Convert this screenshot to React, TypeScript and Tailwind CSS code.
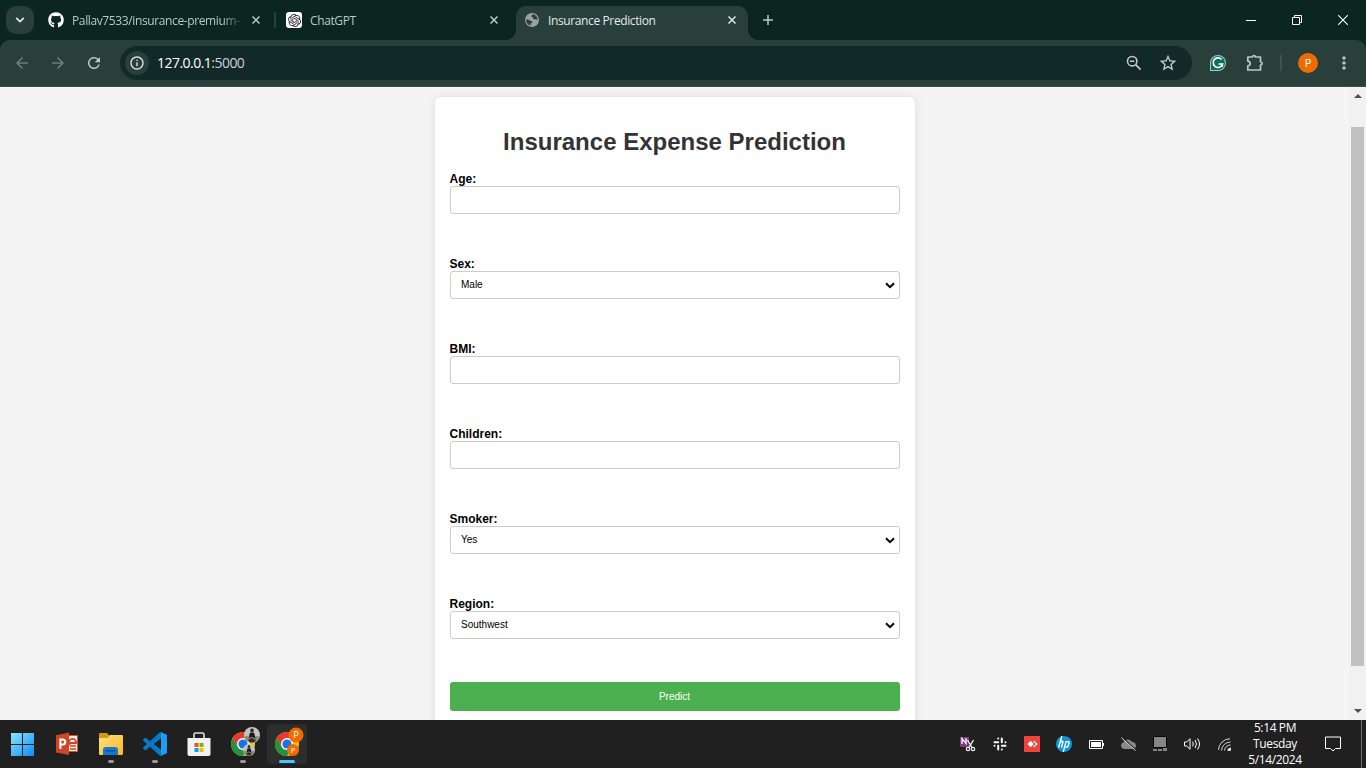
import type { ReactNode } from "react";
import { FaGithub } from "react-icons/fa6";
import { SiOpenai } from "react-icons/si";
import {
  MdArrowBack,
  MdArrowForward,
  MdMoreVert,
  MdOutlineInfo,
  MdRefresh,
  MdStarBorder,
} from "react-icons/md";

function Cross({ className }: { className: string }) {
  return (
    <svg viewBox="0 0 8 8" className={className} fill="none" stroke="currentColor" strokeWidth="1.5">
      <path d="M.5.5l7 7M7.5.5l-7 7" />
    </svg>
  );
}

function TabStrip() {
  return (
    <div className="flex h-10 items-center bg-[#0b2521] pl-1.5 text-[12px] text-[#b4ccc5]">
      <button className="flex size-7 shrink-0 items-center justify-center rounded-[10px] bg-[#293f3b]">
        <svg viewBox="0 0 10 6" className="h-[6px] w-[10px]" fill="none" stroke="#dfe9e6" strokeWidth="1.8">
          <path d="M1.2.8L5 4.6 8.8.8" />
        </svg>
      </button>
      <div className="flex w-[240px] shrink-0 items-center pl-[14px]">
        <FaGithub className="size-4 shrink-0 text-white" />
        <span className="ml-2 w-[168px] pt-0.5 whitespace-nowrap tracking-[-0.38px] [mask-image:linear-gradient(to_right,black_150px,transparent_172px)]">
          Pallav7533/insurance-premium-
        </span>
        <Cross className="ml-[12px] size-2 shrink-0" />
      </div>
      <div className="h-4 w-0.5 shrink-0 bg-[#293f3b]" />
      <div className="flex w-[240px] shrink-0 items-center pl-[10px]">
        <span className="flex size-4 items-center justify-center rounded-[3px] bg-white">
          <SiOpenai className="size-[13px] text-[#222]" />
        </span>
        <span className="ml-2 w-[180px] pt-0.5 tracking-[-0.38px]">ChatGPT</span>
        <Cross className="size-2 shrink-0" />
      </div>
      <div className="flex h-[34px] w-[232px] shrink-0 items-center self-end">
        <div className="relative flex h-full w-full items-center rounded-t-[10px] bg-[#293f3b] pb-[6px] pl-[9px] text-[#e1e9e7] before:absolute before:bottom-0 before:-left-[10px] before:size-[10px] before:bg-[radial-gradient(circle_at_0_0,transparent_9.5px,#293f3b_10.2px)] after:absolute after:-right-[10px] after:bottom-0 after:size-[10px] after:bg-[radial-gradient(circle_at_100%_0,transparent_9.5px,#293f3b_10.2px)]">
          <svg viewBox="0 0 14 14" className="size-[14px]">
            <circle cx="7" cy="7" r="7" fill="#9aa0a6" />
            <path
              d="M8.2 1.3c-.4.9-1.5.8-1.9 1.6-.3.8.6 1.2 1.5 1.2.6.8-.3 1.5.4 2 .9.6 2.5-.2 3.6.5.5.3.7.9.6 1.4A6 6 0 0 0 8.2 1.3zM1.1 6.4c1.8 0 2.9.2 3.8 1 .6.6 1.6.5 2.3 1 .5.5.1 1.5-.7 1.6-1 0-.8 1.2-1 2.4A6 6 0 0 1 1.1 6.4z"
              fill="#293f3b"
            />
          </svg>
          <span className="ml-[9px] w-[179px] pt-0.5 tracking-[-0.38px]">Insurance Prediction</span>
          <Cross className="ml-px size-2 shrink-0" />
        </div>
      </div>
      <svg viewBox="0 0 10 10" className="ml-[15px] size-[10px] shrink-0" stroke="#b4ccc5" strokeWidth="1.5">
        <path d="M5 0v10M0 5h10" />
      </svg>
      <div className="ml-auto flex h-full items-center text-white">
        <div className="flex w-[46px] justify-center">
          <div className="h-px w-[10px] bg-white" />
        </div>
        <div className="flex w-[46px] justify-center">
          <svg viewBox="0 0 10 10" className="size-[10px]" fill="none" stroke="white">
            <path d="M.5 2.5h7v7h-7zM2.5 2.5v-2h7v7h-2" />
          </svg>
        </div>
        <div className="flex w-[46px] justify-center">
          <svg viewBox="0 0 10 10" className="size-[10px]" fill="none" stroke="white" strokeWidth="1.1">
            <path d="M.2.2l9.6 9.6M9.8.2L.2 9.8" />
          </svg>
        </div>
      </div>
    </div>
  );
}

function Toolbar() {
  return (
    <div className="bg-[#0b2521]">
      <div className="flex h-[47px] items-center rounded-t-[10px] border-b border-[#3c4f4b] bg-[#293f3b]">
        <div className="flex w-[120px] shrink-0 items-center pl-1">
          <span className="flex w-9 justify-center text-[#6c7f7a]">
            <MdArrowBack className="size-[18px]" />
          </span>
          <span className="flex w-9 justify-center text-[#6c7f7a]">
            <MdArrowForward className="size-[18px]" />
          </span>
          <span className="flex w-9 justify-center text-[#b4ccc5]">
            <MdRefresh className="size-[18px]" />
          </span>
        </div>
        <div className="flex h-[34px] w-[1072px] shrink-0 items-center rounded-full bg-[#122a27] pl-[5px] text-[#c7c9c8]">
          <span className="flex size-6 items-center justify-center rounded-full bg-[#293f3b]">
            <MdOutlineInfo className="size-4 text-[#dfe6e4]" />
          </span>
          <span className="ml-2 pb-px text-[14px] tracking-[-0.53px] text-[#c9d0ce]">
            <span className="text-white">127.0.0.1</span>:5000
          </span>
          <svg viewBox="0 0 16 16" className="mr-4 ml-auto size-4" fill="none" stroke="currentColor" strokeWidth="1.6">
            <circle cx="6.2" cy="6.2" r="4.7" />
            <path d="M4 6.2h4.4M9.6 9.6l5 5" />
          </svg>
          <MdStarBorder className="mr-[14px] size-5" />
        </div>
        <div className="flex grow items-center text-[#b4ccc5]">
          <svg viewBox="0 0 16 16" className="ml-[18px] size-4">
            <path d="M8 0a8 8 0 1 1 0 16H0V8a8 8 0 0 1 8-8z" fill="#a4c9c1" />
            <path d="M8 1a7 7 0 1 1 0 14H1V8a7 7 0 0 1 7-7z" fill="#08705d" />
            <path d="M11.6 4.5A4.8 4.8 0 1 0 12.6 9H8.6M12.2 8.7l.1 3.2" stroke="white" strokeWidth="1.7" fill="none" />
          </svg>
          <svg viewBox="0 0 18 18" className="ml-5 size-[18px]" fill="none" stroke="currentColor" strokeWidth="1.7">
            <path
              d="M1.8 3h4.5q.3-1.4 1.6-1.4T9.5 3h5v4.8q1.6.2 1.6 1.6t-1.6 1.6V16H1.8v-4.2q2.4-.3 2.4-2.3T1.8 7.2z"
              strokeLinejoin="round"
            />
          </svg>
          <div className="ml-4 h-4 w-0.5 bg-[#40544f]" />
          <span className="ml-4 flex size-5 items-center justify-center rounded-full bg-[#f06c00] text-[11px] text-white">
            P
          </span>
          <MdMoreVert className="ml-[16px] size-5" />
        </div>
      </div>
    </div>
  );
}

function Field({ label, options }: { label: string; options?: string[] }) {
  return (
    <label className="mb-[43px] block text-[12px] leading-[14px] font-bold text-black">
      <span className="block">{label}</span>
      <span className="grid h-7 items-center font-normal">
        {options ? (
          <>
            <select className="col-start-1 row-start-1 h-7 w-full appearance-none rounded-[3px] border border-[#ccc] bg-white px-[10.5px] text-[10px] text-black">
              {options.map((option) => (
                <option key={option}>{option}</option>
              ))}
            </select>
            <svg
              viewBox="0 0 10 7"
              className="pointer-events-none col-start-1 row-start-1 mr-[5px] h-[7px] w-[10px] justify-self-end"
              fill="none"
              stroke="black"
              strokeWidth="2"
            >
              <path d="M1 1.2l4 4 4-4" />
            </svg>
          </>
        ) : (
          <input className="h-7 w-full rounded-[3px] border border-[#ccc] bg-white px-[10px] text-[10px]" />
        )}
      </span>
    </label>
  );
}

function Page() {
  return (
    <main className="flex h-[633px] overflow-hidden bg-[#f4f4f4] font-['Liberation_Sans',Arial,sans-serif]">
      <div className="flex grow justify-center pt-[10px]">
        <form className="h-[700px] w-[480px] rounded-[6px] bg-white px-[15px] pt-[31px] shadow-[0_0_8px_rgba(0,0,0,0.1)]">
          <h1 className="mb-[16px] text-center text-[24px] leading-7 font-bold text-[#333]">Insurance Expense Prediction</h1>
          <Field label="Age:" />
          <Field label="Sex:" options={["Male", "Female"]} />
          <Field label="BMI:" />
          <Field label="Children:" />
          <Field label="Smoker:" options={["Yes", "No"]} />
          <Field label="Region:" options={["Southwest", "Southeast", "Northwest", "Northeast"]} />
          <button type="button" className="h-[29px] w-full rounded-[3px] bg-[#4caf50] text-[10px] text-white">
            Predict
          </button>
        </form>
      </div>
      <div className="flex w-[17px] flex-col items-center bg-[#f1f1f1] pt-[7px] pb-[7px]">
        <svg viewBox="0 0 8 4" className="h-1 w-2" fill="#505050">
          <path d="M4 0l4 4H0z" />
        </svg>
        <div className="mt-[29px] h-[539px] w-[13px] bg-[#c1c1c1]" />
        <svg viewBox="0 0 8 4" className="mt-auto h-1 w-2" fill="#505050">
          <path d="M4 4l4-4H0z" />
        </svg>
      </div>
    </main>
  );
}

function TaskItem({ children, state }: { children: ReactNode; state?: "open" | "active" }) {
  return (
    <div className={state === "active" ? "mx-0.5 flex h-10 w-10 flex-col items-center rounded bg-[#2d2d2d]" : "mx-0.5 flex h-10 w-10 flex-col items-center"}>
      <div className="flex h-9 w-full items-center justify-center pt-1">{children}</div>
      {state === "open" && <div className="h-[3px] w-1.5 rounded-full bg-[#9a9a9a]" />}
      {state === "active" && <div className="h-[3px] w-4 rounded-full bg-[#4cc2ff]" />}
    </div>
  );
}

function ChromeMark({ children }: { children: ReactNode }) {
  return (
    <svg viewBox="0 0 32 32" className="size-8 shrink-0 overflow-visible">
      <circle cx="16" cy="16" r="12" fill="#fbc116" />
      <path d="M5.6 10A12 12 0 0 1 26.4 10H16L10.8 19z" fill="#e33b2e" />
      <path d="M5.6 10A12 12 0 0 0 16 28l5.2-9L16 22l-5.2-3z" fill="#229342" />
      <circle cx="16" cy="16" r="6" fill="white" />
      <circle cx="16" cy="16" r="4.6" fill="#1a73e8" />
      {children}
    </svg>
  );
}

function Portrait({ x, y, r }: { x: number; y: number; r: number }) {
  return (
    <g transform={`translate(${x} ${y}) scale(${r / 8})`}>
      <circle r="8" fill="#c4c4be" />
      <path d="M-7.8 2Q-5 0-3 2L-2 7.6A8 8 0 0 1-7.8 2zM7.8 2Q5 0 3 2L3 7.3A8 8 0 0 0 7.8 2z" fill="#87907b" />
      <path d="M-2.2-2Q0-3 2.2-2L3.5 3.5 1.5 5h-3L-3.5 3.5z" fill="#171b1d" />
      <circle cy="-4" r="1.8" fill="#4e3a32" />
      <path d="M-1.8-4.5Q-1.6-6.5 0-6.5T1.8-4.5z" fill="#181818" />
      <path d="M-4 4.8Q0 3 4 4.8L2 7.4H-2z" fill="#2b2c2c" />
      <path d="M-3.5 3.4L0 2.6l3 1.4" stroke="#c49a80" fill="none" />
    </g>
  );
}

function Taskbar() {
  return (
    <footer className="flex h-12 items-center bg-[#202020] pl-px text-white">
      <TaskItem>
        <svg viewBox="0 0 23 23" className="mr-px size-[23px]">
          <defs>
            <linearGradient id="win" x1="0" y1="0" x2="23" y2="23" gradientUnits="userSpaceOnUse">
              <stop stopColor="#8ce4ff" />
              <stop offset="1" stopColor="#0b8cf5" />
            </linearGradient>
          </defs>
          <path d="M0 0h11v11H0zM12 0h11v11H12zM0 12h11v11H0zM12 12h11v11H12z" fill="url(#win)" />
        </svg>
      </TaskItem>
      <TaskItem>
        <svg viewBox="0 0 24 24" className="mr-px size-6">
          <path d="M12 3.5h10.5v16H12z" fill="#f6eeec" stroke="#d35230" />
          <path d="M1 3.2L14 .5v22.6L1 20.4z" fill="#d04525" />
          <path d="M15 11h6v-1a3.5 3.5 0 1 0-6 2.8" fill="none" stroke="#d04525" strokeWidth="1.8" />
          <path d="M15 14h6M15 17h6" stroke="#d04525" strokeWidth="1.3" />
          <path d="M5.4 17V7.4h2.3a2.6 2.6 0 0 1 0 5.2H5.4" fill="none" stroke="white" strokeWidth="2" />
        </svg>
      </TaskItem>
      <TaskItem state="open">
        <svg viewBox="0 0 26 24" className="h-6 w-[26px]">
          <defs>
            <linearGradient id="folder" x2="1" y2="1">
              <stop stopColor="#ffe085" />
              <stop offset="1" stopColor="#fdb91a" />
            </linearGradient>
          </defs>
          <path d="M1 2q0-1 1-1h7l3 3h8v4H1z" fill="#d39b0c" />
          <path d="M1 6h8.5l2.5-3h12q1 0 1 1v17q0 2-1 2H2q-1 0-1-1z" fill="url(#folder)" />
          <path d="M5 23v-5q0-3 3-3h9q3 0 3 3v5z" fill="#1479cc" />
          <path d="M8.5 18.8h8" stroke="#0c4a87" strokeWidth="1.2" strokeLinecap="round" />
        </svg>
      </TaskItem>
      <TaskItem state="open">
        <svg viewBox="0 0 24 24" className="size-6">
          <path
            d="M23.15 2.587L18.21.21a1.494 1.494 0 0 0-1.705.29l-9.46 8.63-4.12-3.128a.999.999 0 0 0-1.276.057L.327 7.261A1 1 0 0 0 .326 8.74L3.899 12 .326 15.26a1 1 0 0 0 .001 1.479L1.65 17.94a.999.999 0 0 0 1.276.057l4.12-3.128 9.46 8.63a1.492 1.492 0 0 0 1.704.29l4.942-2.377A1.5 1.5 0 0 0 24 20.06V3.939a1.5 1.5 0 0 0-.85-1.352zm-5.146 14.861L10.826 12l7.178-5.448v10.896z"
            fill="#0878c6"
          />
          <path d="M18 .2l5.2 2.4q.8.4.8 1.3v16.2q0 .9-.8 1.3L18 23.8z" fill="#1f9cf0" />
        </svg>
      </TaskItem>
      <TaskItem>
        <svg viewBox="0 0 24 26" className="mr-px h-[26px] w-6">
          <path d="M7 8V3.5Q7 2 8.5 2h7Q17 2 17 3.5V8" fill="none" stroke="#dedede" strokeWidth="1.6" />
          <path d="M.5 7h23v16q0 2-2 2h-19q-2 0-2-2z" fill="#f2f2f2" />
          <path d="M7.5 12h4v4h-4z" fill="#f25022" />
          <path d="M12.5 12h4v4h-4z" fill="#7fba00" />
          <path d="M7.5 17h4v4h-4z" fill="#00a4ef" />
          <path d="M12.5 17h4v4h-4z" fill="#ffb900" />
        </svg>
      </TaskItem>
      <TaskItem state="open">
        <ChromeMark>
          <Portrait x={25} y={7} r={8} />
          <Portrait x={22} y={22} r={6} />
        </ChromeMark>
      </TaskItem>
      <TaskItem state="active">
        <ChromeMark>
          <circle cx="25" cy="7" r="7.5" fill="#f06c00" />
          <text x="25" y="10.3" textAnchor="middle" fontSize="9.5" fill="white">P</text>
          <circle cx="22" cy="22" r="6" fill="#f06c00" />
          <text x="22" y="24.7" textAnchor="middle" fontSize="7.5" fill="white">P</text>
        </ChromeMark>
      </TaskItem>
      <div className="ml-auto flex items-center">
        <div className="flex w-8 justify-center">
          <svg viewBox="0 0 16 16" className="size-4">
            <path d="M0 1h9v10H1L0 10z" fill="#80397b" />
            <path d="M2 8V2.5l4 5V2" stroke="white" strokeWidth="1.3" fill="none" />
            <path d="M7.5 4l4.5 7.5M13.5 4L9 11.5" stroke="#eee" strokeWidth="1.4" />
            <circle cx="8" cy="13" r="1.7" fill="none" stroke="#eee" strokeWidth="1.2" />
            <circle cx="13" cy="13" r="1.7" fill="none" stroke="#eee" strokeWidth="1.2" />
          </svg>
        </div>
        <div className="flex w-8 justify-center">
          <svg viewBox="0 0 14 14" className="size-[14px]" stroke="white" strokeWidth="2" strokeLinecap="round" fill="none">
            <path d="M5.2 5.2H1.5M5.2 1.4v0M8.8 5.2V1.5M12.5 5.2v0M8.8 8.8h3.7M8.8 12.6v0M5.2 8.8v3.7M1.5 8.8v0" />
          </svg>
        </div>
        <div className="flex w-8 justify-center">
          <svg viewBox="0 0 16 16" className="size-4">
            <path d="M0 0h16v16H0z" fill="#ef443b" />
            <path d="M6.6 4.8L9.8 8l-3.2 3.2L3.4 8z" fill="white" />
            <path d="M9.6 5L12.8 8 9.6 11" stroke="white" strokeWidth="1.2" fill="none" />
          </svg>
        </div>
        <div className="flex w-8 justify-center">
          <svg viewBox="0 0 16 16" className="size-4">
            <circle cx="8" cy="8" r="8" fill="#0d96d6" />
            <path
              d="M5.8 0L2.6 11.5M3.9 6.2Q7.5 4 6.8 6.6L5.4 11.6M10.2 5.2L7.2 16M9.6 5.6h2.5q1.3 0 .9 1.3l-.9 3.2q-.3 1-1.4 1H8.5"
              fill="none"
              stroke="white"
              strokeWidth="1.4"
            />
          </svg>
        </div>
        <div className="flex w-8 justify-center">
          <svg viewBox="0 0 15 9" className="h-[9px] w-[15px]">
            <path d="M.5.5h13v8H.5z" fill="none" stroke="white" />
            <path d="M2 2h10v5H2zM14 3h1v3h-1z" fill="white" />
          </svg>
        </div>
        <div className="flex w-8 justify-center">
          <svg viewBox="0 0 17 14" className="h-[14px] w-[17px]">
            <path d="M4 12a3.3 3.3 0 0 1-.8-6.4A5 5 0 0 1 12.2 5a3.6 3.6 0 0 1 1.3 7z" fill="#8a8a8a" />
            <path d="M2.5.8l13 12" stroke="#202020" strokeWidth="1.4" />
            <path d="M1.5.8l14 12.7" stroke="#ddd" />
          </svg>
        </div>
        <div className="flex w-8 justify-center">
          <svg viewBox="0 0 16 16" className="size-4">
            <path d="M1.5.5h13v11h-13z" fill="#868686" stroke="#090909" />
            <path d="M1 13h4v2H1zM6 13h4v2H6zM11 12h4v3h-4z" fill="#868686" />
          </svg>
        </div>
        <div className="flex w-8 justify-center">
          <svg viewBox="0 0 17 14" className="h-[14px] w-[17px]" fill="none" stroke="white">
            <path d="M.5 5h2.2L6 1.7v10.6L2.7 9H.5zM8.5 4.7q1.8 2.3 0 4.6M11 3q3 4 0 8M13.5 1.5q4 5.5 0 11" />
          </svg>
        </div>
        <div className="flex w-8 justify-center">
          <svg viewBox="0 0 13 13" className="size-[13px]" fill="none" stroke="#d5d5d5">
            <path d="M.5 12A11.5 11.5 0 0 1 12 .8M3.5 12.5A9 9 0 0 1 12.5 4M6.5 12.5a6 6 0 0 1 6-5.5" />
            <path d="M9.7 12.5a3 3 0 0 1 2.8-2.6v2.6z" fill="white" />
          </svg>
        </div>
        <div className="flex w-[70px] flex-col items-center text-center text-[12px] leading-4 tracking-[-0.38px] whitespace-nowrap">
          <span>5:14 PM</span>
          <span>Tuesday</span>
          <span>5/14/2024</span>
        </div>
        <svg viewBox="0 0 16 16" className="ml-[15px] size-4" fill="none" stroke="white">
          <path d="M.5 1h15v11.5h-5L8 15l-2.5-2.5h-5z" />
        </svg>
        <div className="mr-1 ml-5 h-12 w-px bg-[#707070]" />
      </div>
    </footer>
  );
}

export default function App() {
  return (
    <div className="flex h-[768px] w-[1366px] flex-col overflow-hidden font-['Open_Sans','Noto_Sans',sans-serif]">
      <TabStrip />
      <Toolbar />
      <Page />
      <Taskbar />
    </div>
  );
}
